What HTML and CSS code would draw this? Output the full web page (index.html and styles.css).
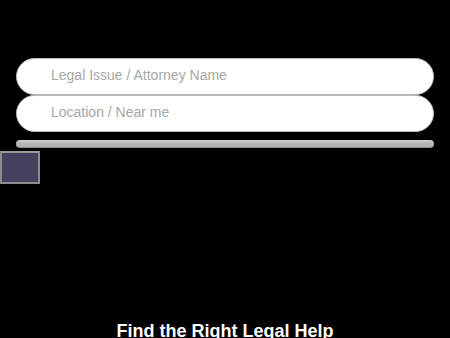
FILE: index.html
```html
<!DOCTYPE html>
<html>
<head>
<meta charset="utf-8">
<link rel="stylesheet" href="styles.css">
</head>
<body>
<div class="search">
  <input class="field" type="text" placeholder="Legal Issue / Attorney Name">
  <input class="field" type="text" placeholder="Location / Near me">
  <div class="bar"></div>
</div>
<div class="swatch"></div>
<h1 class="title">Find the Right Legal Help</h1>
</body>
</html>
```
FILE: styles.css
```css
html, body {
  margin: 0;
  padding: 0;
  background: #000;
  font-family: "Liberation Sans", Arial, sans-serif;
  height: 338px;
  overflow: hidden;
}
.search {
  padding: 58px 16px 0 16px;
  display: flex;
  flex-direction: column;
}
.field {
  box-sizing: border-box;
  height: 37px;
  width: 100%;
  margin: 0;
  border: 1px solid #b9b9b9;
  border-radius: 19px;
  background: #fff;
  padding: 0 0 3px 34px;
  font-family: "Liberation Sans", Arial, sans-serif;
  font-size: 14px;
  color: #333;
  outline: none;
}
.field::placeholder {
  color: #a6a6a6;
}
.bar {
  margin-top: 8px;
  height: 8px;
  box-sizing: border-box;
  border-radius: 4px;
  background: linear-gradient(#d4d4d4, #b8b8b8 40%, #b0b0b0);
  border-bottom: 1px solid #8c8c8c;
}
.swatch {
  margin-top: 3px;
  width: 40px;
  height: 33px;
  box-sizing: border-box;
  background: #45405d;
  border: 2px solid #8a8a8a;
  border-top-color: #9a9a9a;
}
.title {
  margin: 137px 0 0 0;
  text-align: center;
  color: #fff;
  font-size: 18px;
  font-weight: bold;
  line-height: 21px;
}
```
